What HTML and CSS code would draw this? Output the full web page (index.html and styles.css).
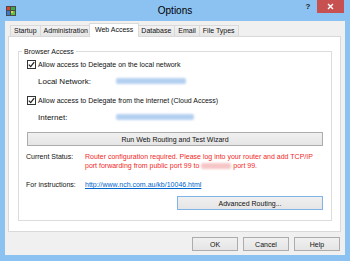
FILE: index.html
```html
<!DOCTYPE html>
<html>
<head>
  <meta charset="UTF-8">
  <title>Options</title>
  <link rel="stylesheet" href="styles.css">
</head>
<body>

<div class="window">
  <div class="titlebar">
    <svg class="app-icon" width="10" height="10" viewBox="0 0 10 10">
      <rect x="0" y="0" width="10" height="10" fill="#4a4a4a"/>
      <rect x="1" y="1" width="3" height="3" fill="#e04030"/>
      <rect x="5" y="1" width="4" height="3" fill="#3aa845"/>
      <rect x="1" y="5" width="3" height="4" fill="#3a78d8"/>
      <rect x="5" y="5" width="4" height="4" fill="#5cc040"/>
      <rect x="5" y="5" width="2" height="2" fill="#e8d040"/>
    </svg>
    <div class="title">Options</div>
    <div class="controls">
      <span class="help-btn">?</span>
      <span class="close-btn">
        <svg width="7" height="7" viewBox="0 0 7 7"><path d="M1 1 L6 6 M6 1 L1 6" stroke="#fff" stroke-width="1.4"/></svg>
      </span>
    </div>
  </div>

  <div class="client">
    <div class="tabs">
      <div class="tab">Startup</div>
      <div class="tab">Administration</div>
      <div class="tab selected">Web Access</div>
      <div class="tab">Database</div>
      <div class="tab">Email</div>
      <div class="tab">File Types</div>
    </div>

    <div class="panel">
      <fieldset class="group">
        <legend>Browser Access</legend>

        <div class="check-row row-first">
          <span class="checkbox"><svg width="7" height="7" viewBox="0 0 7 7"><path d="M0.8 3.6 L2.7 5.6 L6.2 1.2" fill="none" stroke="#222" stroke-width="1.3"/></svg></span>
          Allow access to Delegate on the local network
        </div>
        <div class="addr-row">
          <span class="addr-label">Local Network:</span>
          <span class="blurred" style="width: 70px;"></span>
        </div>

        <div class="check-row row-second">
          <span class="checkbox"><svg width="7" height="7" viewBox="0 0 7 7"><path d="M0.8 3.6 L2.7 5.6 L6.2 1.2" fill="none" stroke="#222" stroke-width="1.3"/></svg></span>
          Allow access to Delegate from the internet (Cloud Access)
        </div>
        <div class="addr-row">
          <span class="addr-label">Internet:</span>
          <span class="blurred" style="width: 78px;"></span>
        </div>

        <button class="btn wide-btn">Run Web Routing and Test Wizard</button>

        <div class="info-row status-row">
          <span class="info-label">Current Status:</span>
          <span class="status-text">Router configuration required. Please log into your router and add TCP/IP<br>port forwarding from public port 99 to <span class="blurred red-blur"></span> port 99.</span>
        </div>

        <div class="info-row link-row">
          <span class="info-label">For instructions:</span>
          <a class="link" href="#">http://www.nch.com.au/kb/10046.html</a>
        </div>

        <div class="adv-row">
          <button class="btn adv-btn">Advanced Routing...</button>
        </div>
      </fieldset>
    </div>

    <div class="buttons">
      <button class="btn dlg-btn">OK</button>
      <button class="btn dlg-btn">Cancel</button>
      <button class="btn dlg-btn">Help</button>
    </div>
  </div>
</div>

</body>
</html>
```

FILE: styles.css
```css
/* Page and window frame */
body {
	margin: 0;
	font-family: "Liberation Sans", Arial, sans-serif;
	font-size: 7px;
	color: #111;
}

.window {
	width: 350px;
	height: 261px;
	background-color: #8cc2f2;
	display: flex;
	flex-direction: column;
}

/* Title bar */
.titlebar {
	height: 21px;
	display: grid;
	grid-template-columns: 1fr auto 1fr;
	align-items: start;
}

.app-icon {
	margin: 6px 0 0 6px;
}

.title {
	font-size: 10px;
	line-height: 21px;
	color: #000;
}

.controls {
	justify-self: end;
	display: flex;
	margin-right: 6px;
}

.help-btn {
	width: 18px;
	height: 13px;
	line-height: 13px;
	text-align: center;
	font-size: 8px;
	font-weight: bold;
	color: #222;
}

.close-btn {
	width: 27px;
	height: 13px;
	background-color: #c75050;
	display: flex;
	align-items: center;
	justify-content: center;
}

/* Client area */
.client {
	flex: 1;
	margin: 0 5px 6px 5px;
	padding: 2px 4px 4px 3px;
	background-color: #f0f0f0;
	display: flex;
	flex-direction: column;
}

/* Tabs */
.tabs {
	height: 13px;
	display: flex;
	align-items: flex-end;
	padding-left: 2px;
}

.tab {
	height: 11px;
	line-height: 10px;
	padding: 0 3px;
	border: 1px solid #d9d9d9;
	border-bottom: none;
	background: linear-gradient(#f2f2f2, #e6e6e6);
	margin-right: -1px;
	box-sizing: border-box;
}

.tab.selected {
	height: 14px;
	line-height: 12px;
	padding: 0 5px;
	margin: 0 -2px -1px -2px;
	background: #fff;
	position: relative;
	z-index: 1;
}

/* Tab page */
.panel {
	flex: 1;
	border: 1px solid #d9d9d9;
	background-color: #fff;
	padding: 10px 8px 10px 9px;
	display: flex;
	flex-direction: column;
}

.group {
	flex: 1;
	margin: 0;
	padding: 0 8px 0 8px;
	border: 1px solid #dcdcdc;
	min-width: 0;
}

.group legend {
	padding: 0 2px;
	margin-left: -5px;
	line-height: 9px;
}

/* Checkbox rows */
.check-row {
	height: 10px;
	display: flex;
	align-items: center;
	gap: 2px;
}

.row-first {
	margin-top: 3px;
}

.row-second {
	margin-top: 9px;
}

.checkbox {
	width: 9px;
	height: 9px;
	box-sizing: border-box;
	border: 1px solid #333;
	background: #fff;
	display: flex;
	align-items: center;
	justify-content: center;
}

.addr-row {
	height: 10px;
	margin-top: 7px;
	display: flex;
	align-items: center;
	padding-left: 11px;
}

.addr-label {
	width: 78px;
	font-size: 8px;
}

/* Hidden addresses in the screenshot */
.blurred {
	display: inline-block;
	height: 6px;
	background-color: #b4d0f0;
	border-radius: 2px;
	filter: blur(1px);
}

.red-blur {
	width: 30px;
	height: 6px;
	background-color: #f6c6c6;
	vertical-align: middle;
}

/* Buttons */
.btn {
	font-family: "Liberation Sans", Arial, sans-serif;
	font-size: 7px;
	color: #111;
	height: 14px;
	padding: 0;
	border: 1px solid #acacac;
	background: linear-gradient(#f0f0f0, #e5e5e5);
}

.wide-btn {
	display: block;
	width: 100%;
	margin-top: 10px;
}

.info-row {
	display: flex;
	margin-left: -1px;
	line-height: 9px;
}

.status-row {
	margin-top: 6px;
}

.link-row {
	margin-top: 10px;
}

.info-label {
	width: 59px;
	flex-shrink: 0;
}

.status-text {
	color: #f02828;
}

.link {
	color: #0066cc;
}

.adv-row {
	margin-top: 7px;
	display: flex;
	justify-content: flex-end;
}

.adv-btn {
	width: 146px;
	border-color: #7eb4ea;
}

/* Dialog buttons */
.buttons {
	margin-top: 5px;
	display: flex;
	justify-content: flex-end;
	gap: 5px;
	padding-right: 1px;
}

.dlg-btn {
	width: 46px;
}
```
